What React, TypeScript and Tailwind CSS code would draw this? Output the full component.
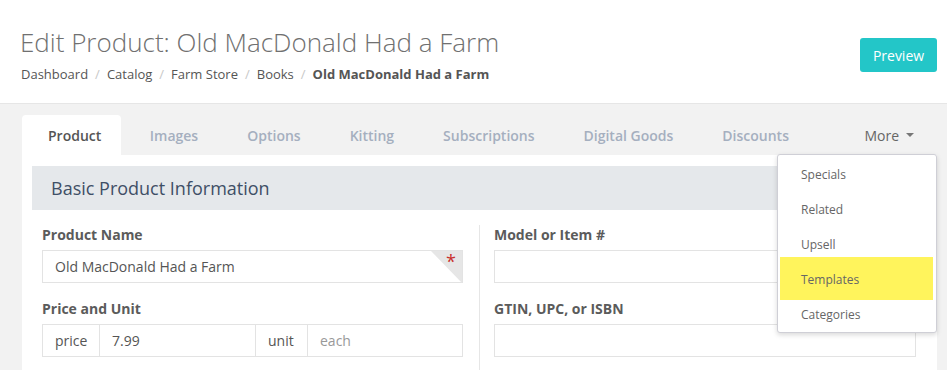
import { useState } from 'react';

const tabs = ['Product', 'Images', 'Options', 'Kitting', 'Subscriptions', 'Digital Goods', 'Discounts'];
const crumbs = ['Dashboard', 'Catalog', 'Farm Store', 'Books'];
const moreItems = ['Specials', 'Related', 'Upsell', 'Templates', 'Categories'];

function Field({ label, children }: { label: string; children: React.ReactNode }) {
  return (
    <div className="mb-[16px]">
      <label className="block text-[14px] leading-[20px] font-bold text-[#5b5b5b] mb-[5px]">{label}</label>
      {children}
    </div>
  );
}

export default function App() {
  const [active] = useState('Product');

  return (
    <div className="w-[947px] h-[370px] overflow-hidden bg-[#f2f2f2] font-['Open_Sans',sans-serif] text-[#555]">
      <header className="h-[104px] bg-white border-b border-[#e6e6e6] flex items-start justify-between pl-[20px] pr-[10px] pt-[26px]">
        <div>
          <h1 className="text-[26px] leading-[32px] font-light text-[#707070]">Edit Product: Old MacDonald Had a Farm</h1>
          <nav className="mt-[6px] pl-[1px] text-[13px] leading-[20px] flex items-center">
            {crumbs.map((c) => (
              <span key={c} className="flex items-center">
                <span>{c}</span>
                <span className="text-[#c8c8c8] px-[7px]">/</span>
              </span>
            ))}
            <span className="font-bold">Old MacDonald Had a Farm</span>
          </nav>
        </div>
        <button className="mt-[12px] h-[34px] w-[77px] rounded-[3px] bg-[#23c6c8] text-white text-[14px]">Preview</button>
      </header>

      <div className="pl-[22px] pr-[10px] pt-[11px]">
        <div className="relative">
          <ul className="flex h-[40px] items-stretch text-[14px] font-semibold">
            {tabs.map((t) => (
              <li
                key={t}
                className={
                  t === active
                    ? 'flex items-center pl-[26px] pr-[20px] mr-[4px] bg-white rounded-t-[4px] text-[#555]'
                    : 'flex items-center px-[24.5px] text-[#a5afbf]'
                }
              >
                {t}
              </li>
            ))}
            <li className="ml-auto flex items-center pr-[23px] font-normal text-[#666]">
              More
              <svg className="ml-[7px]" width="8" height="4" viewBox="0 0 8 4">
                <polygon points="0,0 8,0 4,4" fill="#777" />
              </svg>
            </li>
          </ul>

          <div className="bg-white px-[10px] pt-[11px] h-[220px]">
            <div className="h-[44px] bg-[#e5e8eb] flex items-center pl-[19px] text-[18px] text-[#3f4f66]">
              Basic Product Information
            </div>
            <div className="flex pt-[15px]">
              <div className="w-[448px] pl-[10px] pr-[16px] border-r border-[#e6e6e6]">
                <Field label="Product Name">
                  <div className="relative h-[33px] border border-[#e3e3e3] flex items-center pl-[12px] text-[14px] text-[#555]">
                    Old MacDonald Had a Farm
                    <svg className="absolute right-0 top-0" width="31" height="32" viewBox="0 0 31 32">
                      <polygon points="0,0 31,0 31,32" fill="#e6e6e6" />
                    </svg>
                    <span className="absolute right-[6px] top-[-3px] text-[18px] text-[#c9302c]">*</span>
                  </div>
                </Field>
                <Field label="Price and Unit">
                  <div className="flex h-[33px] border border-[#e3e3e3] text-[14px]">
                    <span className="w-[57px] flex items-center pl-[12px] border-r border-[#e3e3e3]">price</span>
                    <span className="w-[156px] flex items-center pl-[12px] border-r border-[#e3e3e3]">7.99</span>
                    <span className="w-[52px] flex items-center pl-[12px] border-r border-[#e3e3e3]">unit</span>
                    <span className="flex-1 flex items-center pl-[12px] text-[#999]">each</span>
                  </div>
                </Field>
              </div>
              <div className="flex-1 pl-[14px] pr-[11px]">
                <Field label="Model or Item #">
                  <div className="h-[33px] border border-[#e3e3e3]" />
                </Field>
                <Field label="GTIN, UPC, or ISBN">
                  <div className="h-[33px] border border-[#e3e3e3]" />
                </Field>
              </div>
            </div>
          </div>

          <div className="absolute left-[755px] top-[39px] w-[160px] h-[179px] bg-white border border-[#cfcfd6] rounded-[3px] shadow-[0_2px_5px_rgba(0,0,0,0.15)] py-[2px]">
            <div className="absolute left-[2px] right-[3px] top-[102px] h-[43px] bg-[#fff45c]" />
            {moreItems.map((m) => (
              <div key={m} className="relative h-[35px] flex items-center pl-[23px] text-[12px] text-[#666]">
                {m}
              </div>
            ))}
          </div>
        </div>
      </div>
    </div>
  );
}
